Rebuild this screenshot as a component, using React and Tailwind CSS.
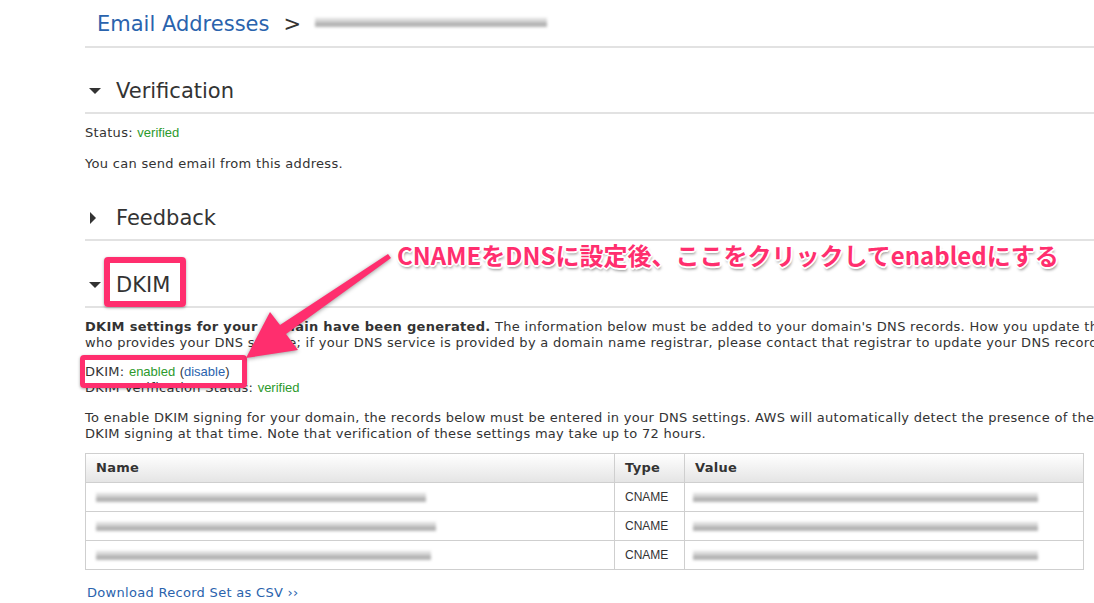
import React from "react";

const body = "font-['DejaVu_Sans','Verdana',sans-serif]";
const arial = "font-['Liberation_Sans','Arial',sans-serif] tracking-normal";

function Blur({ className }) {
  return (
    <div className={"flex flex-col blur-[1.5px] " + className}>
      <div className="h-[4px] bg-[#dcdcdc]"></div>
      <div className="h-[5px] bg-[#b4b4b4]"></div>
    </div>
  );
}

function SectionHeader({ title, open, height, pad }) {
  return (
    <div className={"flex items-center border-b-2 border-[#e2e2e2] " + height + " " + pad}>
      <div className="w-[31px] flex items-center pl-[4px]">
        {open ? (
          <svg width="12" height="7" viewBox="0 0 12 7">
            <path d="M0 0 L12 0 L6 6 Z" fill="#333" />
          </svg>
        ) : (
          <svg width="7" height="12" viewBox="0 0 7 12">
            <path d="M1 0 L7 6 L1 12 Z" fill="#333" />
          </svg>
        )}
      </div>
      <span className="text-[21px] text-[#333] leading-none tracking-normal">{title}</span>
    </div>
  );
}

const rows = [
  { name: "w-[330px]", value: "w-[345px]" },
  { name: "w-[340px]", value: "w-[345px]" },
  { name: "w-[335px]", value: "w-[345px]" },
];

export default function App() {
  return (
    <div className={"relative w-[1094px] h-[603px] overflow-hidden bg-white " + body}>
      <div className="ml-[85px] w-[1200px] text-[13px] tracking-[0.3px] text-[#333]">
        {/* breadcrumb */}
        <div className="h-[48px] pt-[2px] flex items-center border-b-2 border-[#e2e2e2] w-[1009px] tracking-normal">
          <span className="ml-[12px] text-[21px] text-[#2a63ad] leading-none">Email Addresses</span>
          <span className="ml-[14px] text-[21px] text-[#333] leading-none">&gt;</span>
          <Blur className="ml-[14px] w-[232px] h-[12px]" />
        </div>

        <div className="w-[1009px]">
          <SectionHeader title="Verification" open height="h-[66px]" pad="pt-[22px]" />
        </div>
        <div className="mt-[11px] leading-[16px]">
          Status: <span className={arial + " text-[13px] text-[#2c9a2c]"}>verified</span>
        </div>
        <div className="mt-[15px] leading-[16px]">You can send email from this address.</div>

        <div className="w-[1009px]">
          <SectionHeader title="Feedback" height="h-[69px]" pad="pt-[25px]" />
          <SectionHeader title="DKIM" open height="h-[67px]" pad="pt-[23px]" />
        </div>

        <div className="mt-[11px] leading-[16px] whitespace-nowrap">
          <div>
            <b>DKIM settings for your domain have been generated.</b> The information below must be added to
            your domain's DNS records. How you update the DNS records depends on
          </div>
          <div>
            who provides your DNS service; if your DNS service is provided by a domain name registrar, please
            contact that registrar to update your DNS records.
          </div>
        </div>

        <div className="mt-[13px] leading-[16px]">
          DKIM: <span className={arial + " text-[13px] text-[#2c9a2c]"}>enabled</span>{" "}
          <span className={arial + " text-[13px]"}>
            (<span className="text-[#2a63ad]">disable</span>)
          </span>
        </div>
        <div className="leading-[16px]">
          DKIM Verification Status: <span className={arial + " text-[13px] text-[#2c9a2c]"}>verified</span>
        </div>

        <div className="mt-[14px] leading-[16px] whitespace-nowrap">
          <div>
            To enable DKIM signing for your domain, the records below must be entered in your DNS settings. AWS
            will automatically detect the presence of these records, and allow
          </div>
          <div>DKIM signing at that time. Note that verification of these settings may take up to 72 hours.</div>
        </div>

        <table className="mt-[11px] w-[999px] border-collapse border border-[#cfcfcf]">
          <thead>
            <tr className="h-[29px] bg-gradient-to-b from-white to-[#e4e4e4]">
              <th className="w-[529px] text-left pl-[10px] border border-[#cfcfcf] font-bold">Name</th>
              <th className="w-[70px] text-left pl-[10px] border border-[#cfcfcf] font-bold">Type</th>
              <th className="text-left pl-[10px] border border-[#cfcfcf] font-bold">Value</th>
            </tr>
          </thead>
          <tbody>
            {rows.map((r, i) => (
              <tr key={i} className="h-[29px]">
                <td className="border border-[#cfcfcf] pl-[10px]">
                  <Blur className={r.name} />
                </td>
                <td className={"border border-[#cfcfcf] pl-[10px] text-[12px] " + arial}>CNAME</td>
                <td className="border border-[#cfcfcf] pl-[8px]">
                  <Blur className={r.value} />
                </td>
              </tr>
            ))}
          </tbody>
        </table>

        <div className="mt-[15px] leading-[16px] text-[#2a63ad] ml-[2px]">Download Record Set as CSV &rsaquo;&rsaquo;</div>
      </div>

      {/* annotation overlay */}
      <div className="absolute left-[104px] top-[257px] w-[82px] h-[50px] border-[6px] border-[#ff2e6e] rounded-[4px] shadow-[0_1px_3px_rgba(0,0,0,0.35)]"></div>
      <div className="absolute left-[80px] top-[355px] w-[167px] h-[33px] border-[5px] border-[#ff2e6e] rounded-[4px] shadow-[0_1px_3px_rgba(0,0,0,0.35)]"></div>
      <svg className="absolute left-0 top-0" width="1094" height="603" viewBox="0 0 1094 603">
        <polygon
          points="388,254 280,325 270,312 246,358 298,350 286,334 391,258"
          fill="#ff2e6e"
          style={{ filter: "drop-shadow(0 1px 2px rgba(0,0,0,0.4))" }}
        />
      </svg>
      <div
        className="absolute left-[397px] top-[240px] text-[24px] font-bold leading-[30px] text-[#ff2e6e] tracking-[0px] whitespace-nowrap font-['Noto_Sans_CJK_JP',sans-serif] [text-shadow:-2px_0_0_#fff,2px_0_0_#fff,0_-2px_0_#fff,0_2px_0_#fff,-1px_-1px_0_#fff,1px_1px_0_#fff,1px_-1px_0_#fff,-1px_1px_0_#fff,1px_3px_3px_rgba(0,0,0,0.45)]"
      >
        CNAMEをDNSに設定後、ここをクリックしてenabledにする
      </div>
    </div>
  );
}
